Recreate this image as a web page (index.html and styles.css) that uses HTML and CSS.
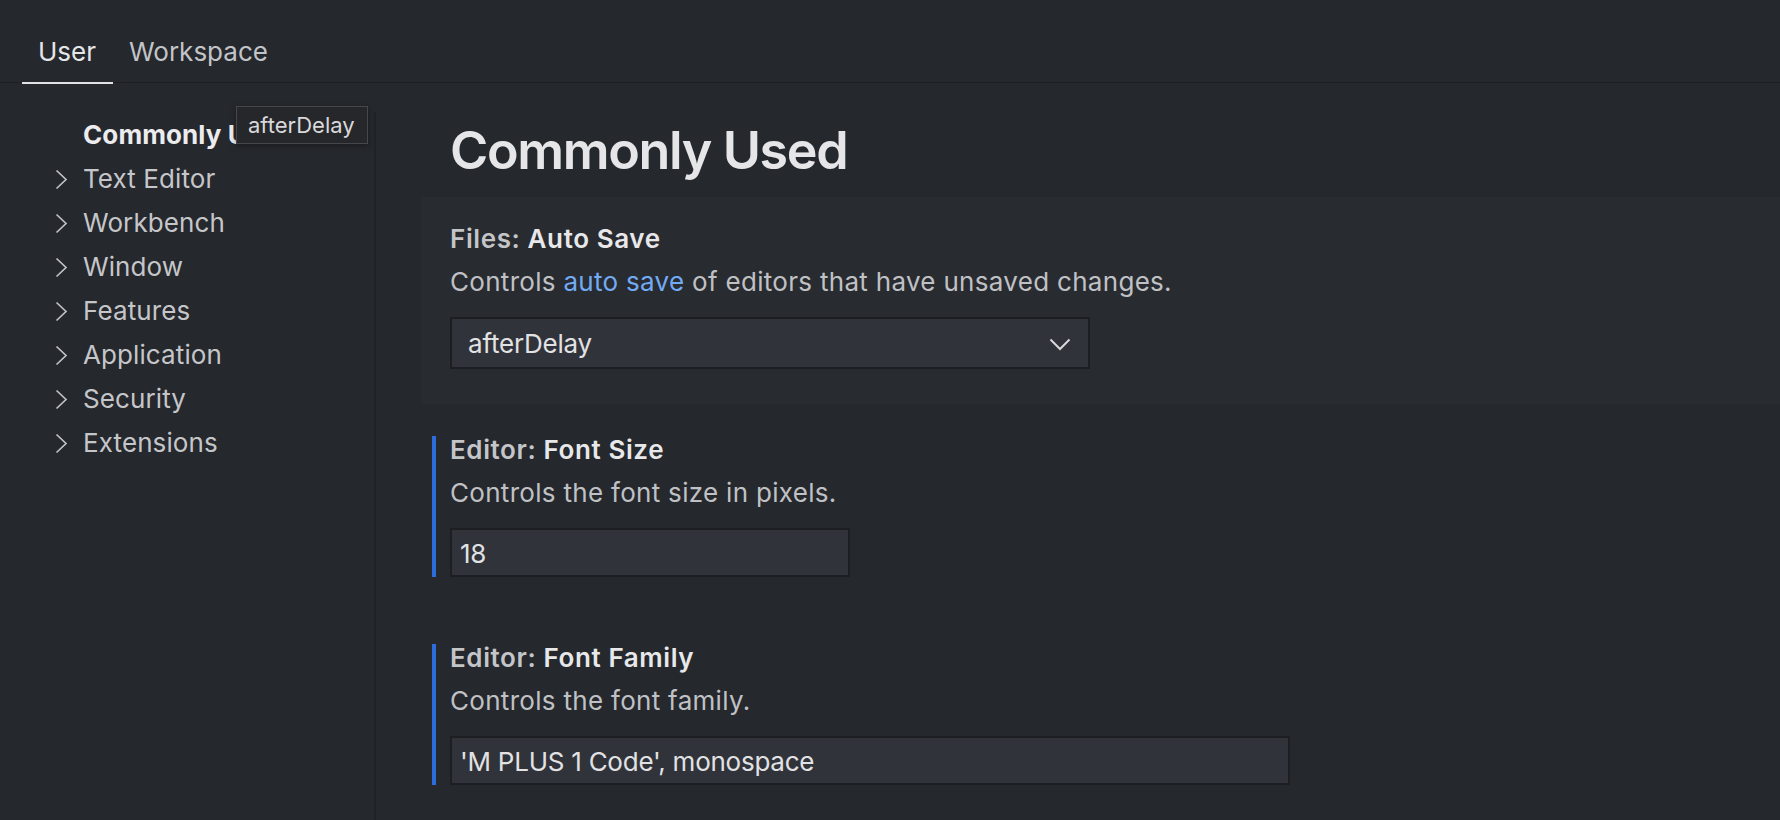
FILE: index.html
```html
<!DOCTYPE html>
<html lang="en">
<head>
<meta charset="utf-8">
<title>Settings</title>
<link rel="stylesheet" href="styles.css">
</head>
<body>
<div class="app">
  <div class="tabs">
    <div class="tab active">User</div>
    <div class="tab">Workspace</div>
  </div>
  <div class="body">
    <nav class="toc">
      <div class="toc-row selected"><span class="twistie"></span><span class="toc-label">Commonly Used</span></div>
      <div class="toc-row"><span class="twistie"><svg width="13" height="21" viewBox="0 0 13 21"><polyline points="1.5,1.5 11,10.5 1.5,19.5" fill="none" stroke="currentColor" stroke-width="1.7"/></svg></span><span class="toc-label">Text Editor</span></div>
      <div class="toc-row"><span class="twistie"><svg width="13" height="21" viewBox="0 0 13 21"><polyline points="1.5,1.5 11,10.5 1.5,19.5" fill="none" stroke="currentColor" stroke-width="1.7"/></svg></span><span class="toc-label">Workbench</span></div>
      <div class="toc-row"><span class="twistie"><svg width="13" height="21" viewBox="0 0 13 21"><polyline points="1.5,1.5 11,10.5 1.5,19.5" fill="none" stroke="currentColor" stroke-width="1.7"/></svg></span><span class="toc-label">Window</span></div>
      <div class="toc-row"><span class="twistie"><svg width="13" height="21" viewBox="0 0 13 21"><polyline points="1.5,1.5 11,10.5 1.5,19.5" fill="none" stroke="currentColor" stroke-width="1.7"/></svg></span><span class="toc-label">Features</span></div>
      <div class="toc-row"><span class="twistie"><svg width="13" height="21" viewBox="0 0 13 21"><polyline points="1.5,1.5 11,10.5 1.5,19.5" fill="none" stroke="currentColor" stroke-width="1.7"/></svg></span><span class="toc-label">Application</span></div>
      <div class="toc-row"><span class="twistie"><svg width="13" height="21" viewBox="0 0 13 21"><polyline points="1.5,1.5 11,10.5 1.5,19.5" fill="none" stroke="currentColor" stroke-width="1.7"/></svg></span><span class="toc-label">Security</span></div>
      <div class="toc-row"><span class="twistie"><svg width="13" height="21" viewBox="0 0 13 21"><polyline points="1.5,1.5 11,10.5 1.5,19.5" fill="none" stroke="currentColor" stroke-width="1.7"/></svg></span><span class="toc-label">Extensions</span></div>
    </nav>
    <main class="main">
      <h1 class="group-title">Commonly Used</h1>
      <div class="setting focused">
        <div class="setting-title"><span class="category">Files: </span><span class="label">Auto Save</span></div>
        <div class="setting-desc">Controls <span class="link">auto save</span> of editors that have unsaved changes.</div>
        <div class="control select">
          <span class="select-value">afterDelay</span>
          <svg class="select-chevron" width="22" height="13" viewBox="0 0 22 13"><polyline points="1.5,1.5 11,11 20.5,1.5" fill="none" stroke="currentColor" stroke-width="2"/></svg>
        </div>
      </div>
      <div class="setting modified">
        <div class="indicator"></div>
        <div class="setting-title"><span class="category">Editor: </span><span class="label">Font Size</span></div>
        <div class="setting-desc">Controls the font size in pixels.</div>
        <div class="control input input-small">18</div>
      </div>
      <div class="setting modified">
        <div class="indicator"></div>
        <div class="setting-title"><span class="category">Editor: </span><span class="label">Font Family</span></div>
        <div class="setting-desc">Controls the font family.</div>
        <div class="control input input-wide">'M PLUS 1 Code', monospace</div>
      </div>
    </main>
  </div>
  <div class="tooltip">afterDelay</div>
</div>
</body>
</html>
```

FILE: styles.css
```css
html, body {
  margin: 0;
  padding: 0;
  background: #25282d;
}

body {
  font-family: "Inter", "Noto Sans", "Liberation Sans", sans-serif;
  color: #c8c8cb;
  width: 1780px;
  height: 820px;
  overflow: hidden;
}

.app {
  position: relative;
  width: 1780px;
  height: 820px;
  overflow: hidden;
}

/* Tabs */
.tabs {
  display: flex;
  height: 82px;
  padding-left: 22px;
  border-bottom: 1px solid #1d1f23;
  align-items: flex-start;
}

.tab {
  position: relative;
  margin-top: 30px;
  height: 52px;
  padding: 0 16px;
  font-size: 26px;
  line-height: 44px;
  color: #c3c4c7;
}

.tab.active {
  color: #e6e6e8;
  padding: 0 17px 0 16px;
}

.tab.active::after {
  content: "";
  position: absolute;
  left: 0;
  right: 0;
  bottom: -2px;
  height: 2px;
  background: #e2e2e4;
}

/* Body */
.body {
  display: flex;
}

.toc {
  width: 374px;
  flex: none;
  margin-top: 29px;
  padding-top: 1px;
  height: 720px;
  border-right: 2px solid #1f2226;
}

.toc-row {
  display: flex;
  align-items: center;
  height: 44px;
  padding-left: 55px;
  font-size: 26px;
  line-height: 44px;
  letter-spacing: 0.1px;
  color: #c5c6c9;
  white-space: nowrap;
}

.toc-row.selected {
  color: #ececee;
  font-weight: 700;
}

.twistie {
  display: flex;
  align-items: center;
  width: 28px;
  height: 44px;
  flex: none;
  color: #c0c1c4;
}

.main {
  flex: 1;
  padding-top: 32px;
  padding-left: 45px;
}

.group-title {
  margin: 0 0 10px 0;
  padding-left: 29px;
  font-size: 52px;
  line-height: 72px;
  font-weight: 600;
  letter-spacing: -1.35px;
  color: #e6e6e8;
}

.setting {
  position: relative;
  padding: 24px 0 35px 29px;
}

.setting + .setting {
  margin-top: 4px;
}

.setting.focused {
  background: #282b30;
}

.indicator {
  position: absolute;
  left: 11px;
  top: 28px;
  bottom: 35px;
  width: 4px;
  background: #2d6ddb;
}

.setting-title {
  font-size: 26px;
  line-height: 36px;
  font-weight: 600;
  letter-spacing: 0.6px;
}

.category {
  color: #c4c5c8;
}

.label {
  color: #e8e8ea;
}

.setting-desc {
  margin-top: 7px;
  font-size: 26px;
  line-height: 36px;
  letter-spacing: 0.3px;
  color: #c0c1c4;
}

.link {
  color: #72aaf4;
}

.control {
  margin-top: 17px;
  box-sizing: border-box;
  border: 2px solid #1c1e22;
  background: #30333a;
  font-size: 26px;
  color: #e2e2e4;
}

.select {
  width: 640px;
  height: 52px;
  display: flex;
  align-items: center;
  justify-content: space-between;
  padding: 0 17px 0 16px;
  letter-spacing: -0.2px;
}

.select-chevron {
  color: #d8d8da;
  margin-top: 2px;
}

.input {
  height: 49px;
  line-height: 45px;
  padding-left: 8px;
  padding-top: 1px;
  letter-spacing: -0.25px;
}

.input-small {
  width: 400px;
}

.input-wide {
  width: 840px;
}

/* Tooltip over the TOC */
.tooltip {
  position: absolute;
  left: 236px;
  top: 106px;
  box-sizing: border-box;
  width: 132px;
  height: 38px;
  padding-left: 11px;
  border: 1px solid #46474b;
  background: #26272a;
  color: #d9d9db;
  font-size: 22px;
  line-height: 36px;
  box-shadow: 0 2px 6px rgba(0, 0, 0, 0.35);
  white-space: nowrap;
}
```
